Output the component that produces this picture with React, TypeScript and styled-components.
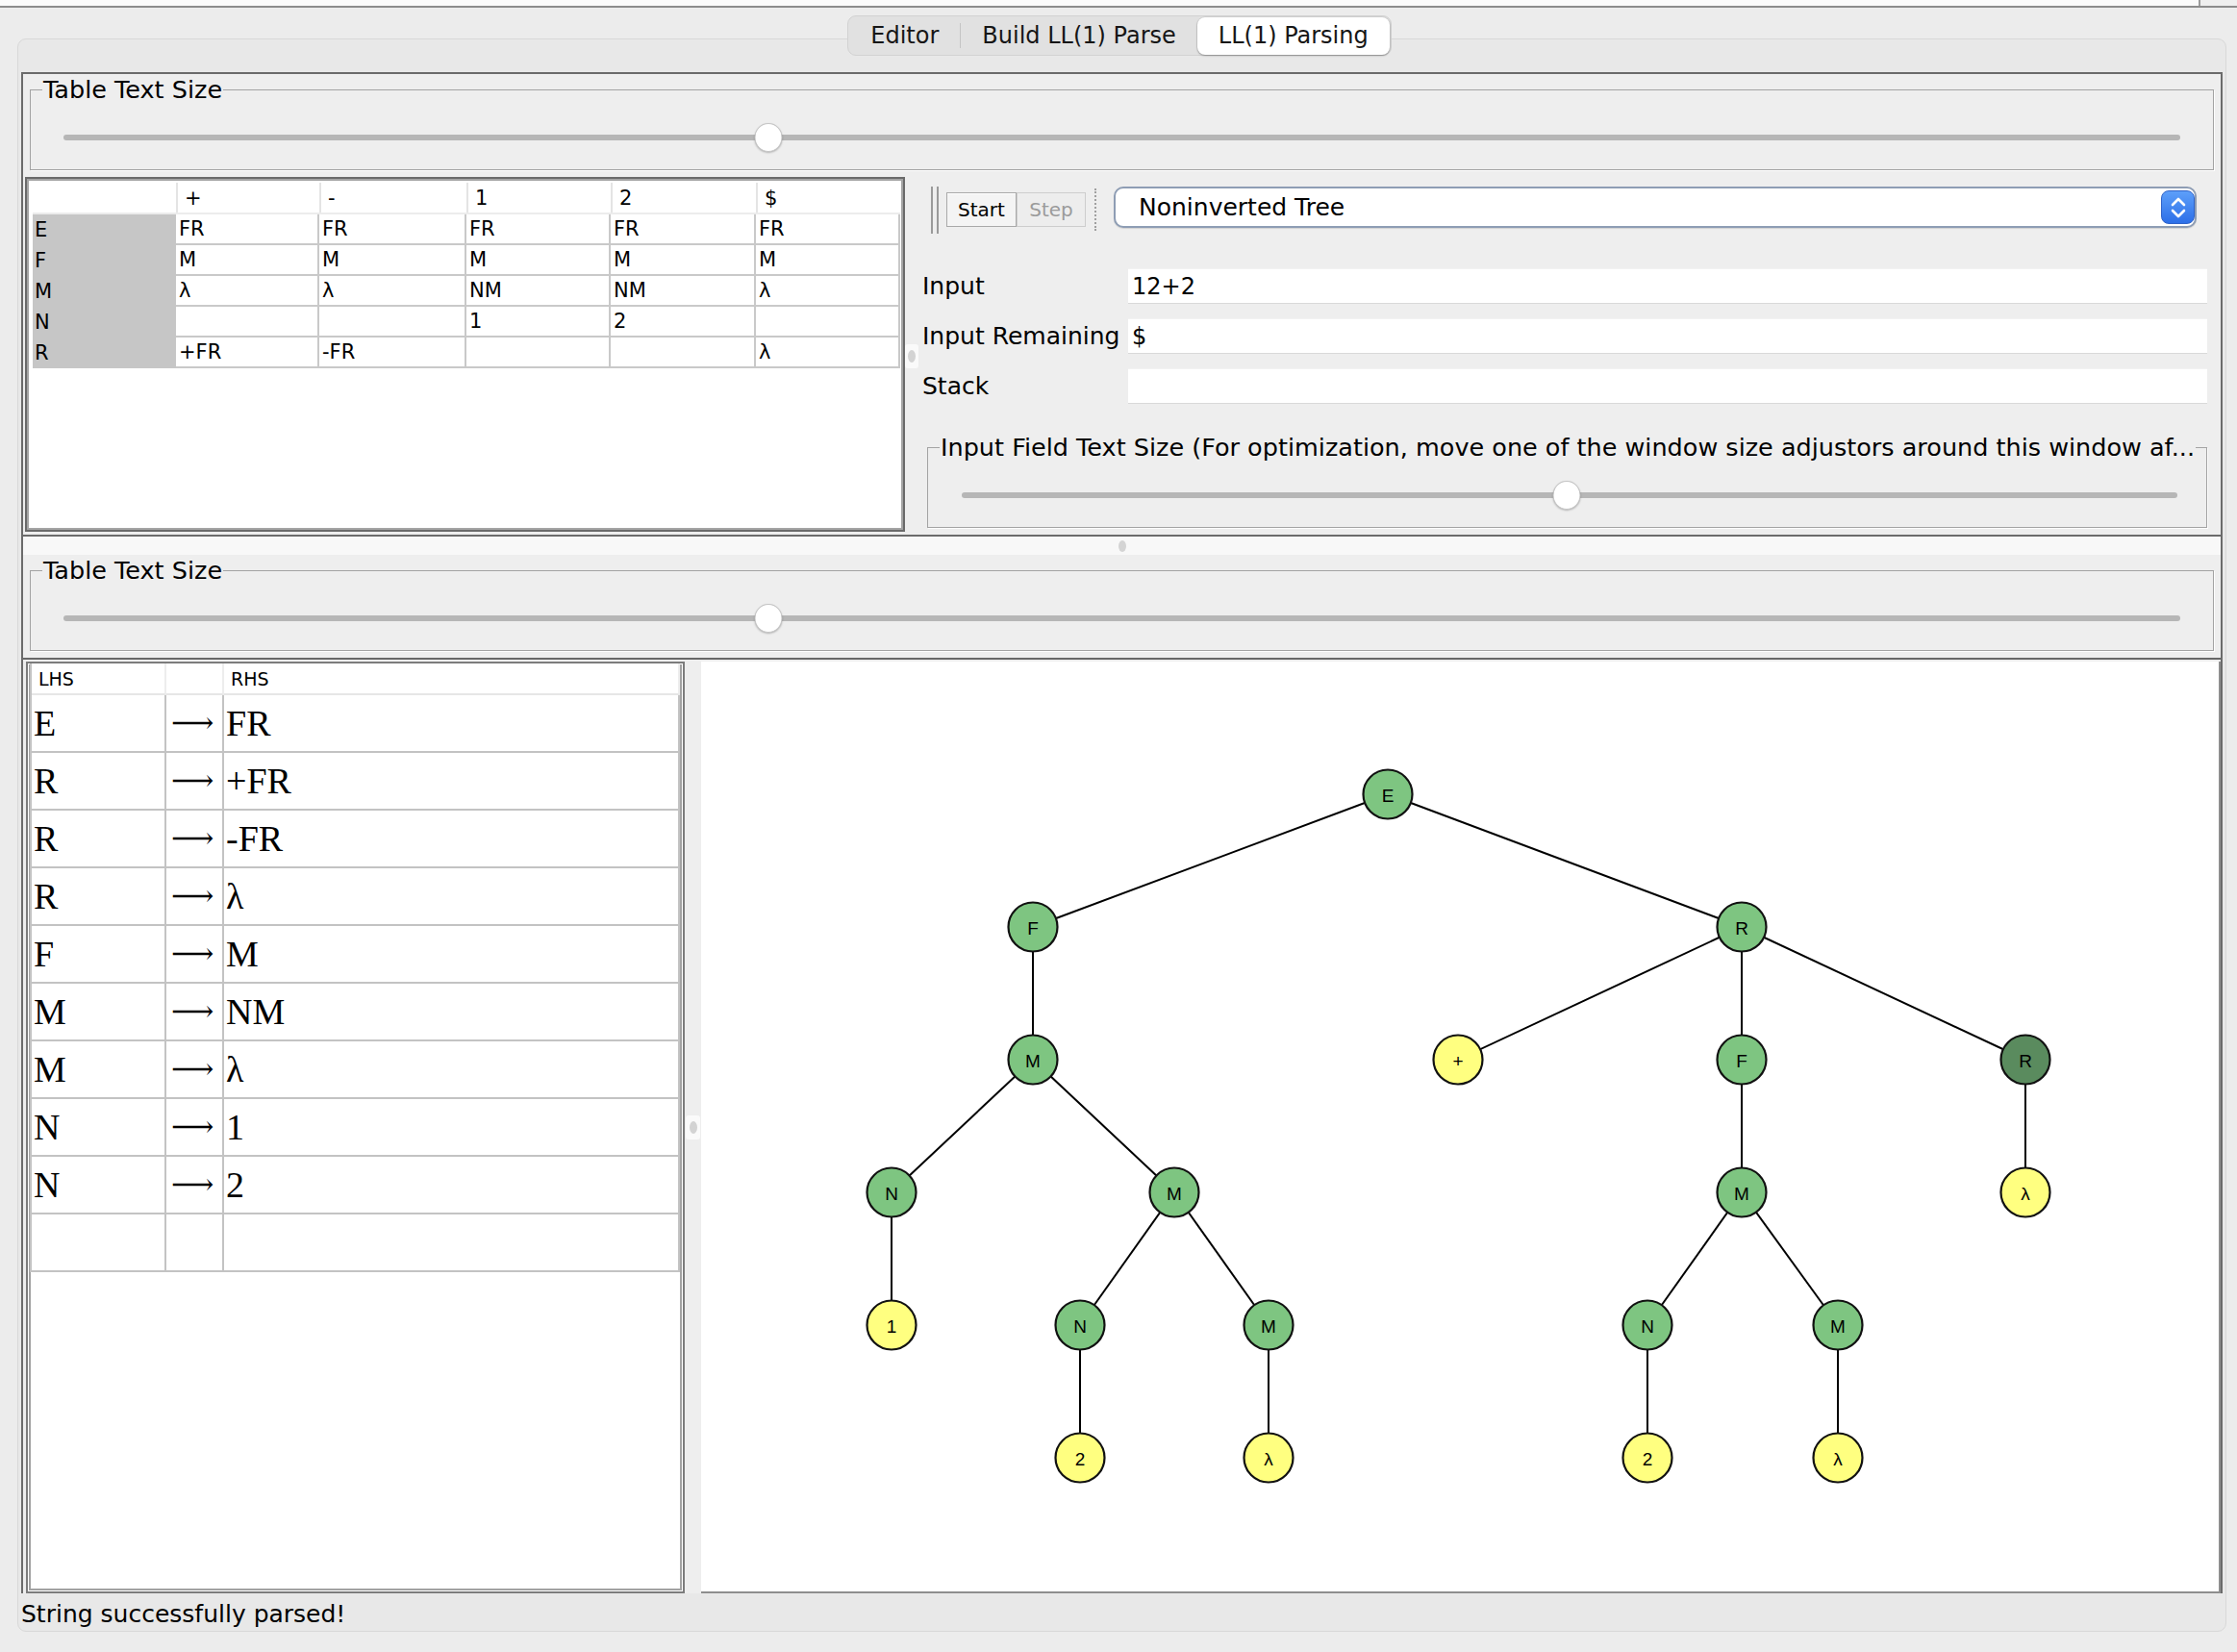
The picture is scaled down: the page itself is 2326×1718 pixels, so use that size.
import React from "react";
import styled, { createGlobalStyle } from "styled-components";

const UI = `"DejaVu Sans", "Open Sans", sans-serif`;
const SERIF = `"Liberation Serif", "DejaVu Serif", serif`;

const GlobalStyle = createGlobalStyle`
  *, *::before, *::after { box-sizing: border-box; }
  html, body { margin: 0; padding: 0; background: #ececec; }
  body { font-family: ${UI}; color: #000; }
`;

const Window = styled.div`
  width: 2326px;
  height: 1718px;
  overflow: hidden;
  background: #ececec;
  display: flex;
  flex-direction: column;
`;

const TopStrip = styled.div`
  flex: none;
  height: 8px;
  background: #fbfbfb;
  border-bottom: 2px solid #8c8c8c;
  display: flex;
  justify-content: flex-end;
`;

const TopStripCap = styled.div`
  width: 40px;
  background: #efefef;
  border-left: 2px solid #9c9c9c;
`;

const TabsRow = styled.div`
  flex: none;
  position: relative;
  z-index: 1;
  height: 42px;
  margin-top: 8px;
  padding-left: 2px;
  display: flex;
  justify-content: center;
`;

const TabGroup = styled.div`
  display: flex;
  align-items: center;
  height: 42px;
  padding: 0 1px;
  background: #e1e1e1;
  border: 1px solid #d2d2d2;
  border-radius: 9px;
`;

const Tab = styled.div<{ $active?: boolean }>`
  height: 39px;
  display: flex;
  align-items: center;
  padding: 0 22px;
  font-size: 24px;
  color: #161616;
  border-radius: 8px;
  background: ${(p) => (p.$active ? "#ffffff" : "transparent")};
  box-shadow: ${(p) =>
    p.$active ? "0 1px 2px rgba(0,0,0,0.3), 0 0 0 1px rgba(0,0,0,0.06)" : "none"};
`;

const TabDivider = styled.div`
  width: 1px;
  height: 26px;
  background: #c4c4c4;
`;

const Panel = styled.div`
  flex: none;
  width: 2297px;
  height: 1657px;
  margin: -18px 0 0 18px;
  padding: 34px 3px 0 3px;
  background: #e8e8e8;
  border: 1px solid #d8d8d8;
  border-radius: 9px;
  display: flex;
  flex-direction: column;
`;

const SplitFrame = styled.div`
  flex: none;
  height: 1582px;
  border: 2px solid #6b6b6b;
  border-bottom: none;
  background: #eeeeee;
  display: flex;
  flex-direction: column;
`;

const TopPane = styled.div`
  flex: none;
  height: 481px;
  border-bottom: 2px solid #6b6b6b;
  display: flex;
  flex-direction: column;
`;

const Group = styled.fieldset<{ $ml: number; $mr: number }>`
  flex: none;
  min-width: 0;
  margin: 2px ${(p) => p.$mr}px 0 ${(p) => p.$ml}px;
  padding: 0 12px;
  border: 1px solid #a3a3a3;
  box-shadow: 1px 1px 0 #ffffff;
`;

const GroupTitle = styled.legend`
  padding: 0 1px;
  font-size: 25.5px;
  line-height: 28px;
  color: #000;
  white-space: nowrap;
`;

const SliderRow = styled.div<{ $pl: number; $pr: number }>`
  height: 69px;
  padding: 3px ${(p) => p.$pr}px 0 ${(p) => p.$pl}px;
  display: flex;
  align-items: center;
`;

const Track = styled.div`
  position: relative;
  flex: 1;
  height: 6px;
  border-radius: 3px;
  background: #b6b6b6;
`;

const Thumb = styled.div<{ $pos: number }>`
  position: absolute;
  top: 50%;
  left: ${(p) => p.$pos}%;
  width: 29px;
  height: 30px;
  transform: translate(-50%, -50%);
  border-radius: 50%;
  background: #ffffff;
  border: 1px solid #c4c4c4;
  box-shadow: 0 1px 2px rgba(0, 0, 0, 0.25);
`;

const HSplit = styled.div`
  flex: 1;
  min-height: 0;
  margin-top: 7px;
  padding-left: 2px;
  display: flex;
`;

const TableFrame = styled.div`
  flex: none;
  width: 915px;
  height: 369px;
  padding: 4px 3px 0 6px;
  background: #ffffff;
  border: 2px solid #6a6a6a;
  box-shadow: inset 0 0 0 2px #a4a4a4;
`;

const ParseGrid = styled.div`
  display: grid;
  grid-template-columns: 149px 149px 153px 150px 151px 150px;
  grid-template-rows: 33px;
  grid-auto-rows: 32px;
  font-size: 21px;
`;

const ParseHead = styled.div<{ $first?: boolean }>`
  display: flex;
  align-items: center;
  padding-left: 9px;
  background: #ffffff;
  border-bottom: 2px solid #ececec;
  box-shadow: ${(p) => (p.$first ? "none" : "inset 2px 0 0 #e4e4e4")};
`;

const ParseRowHead = styled.div`
  display: flex;
  align-items: center;
  padding-left: 2px;
  background: #c6c6c6;
`;

const ParseCell = styled.div`
  display: flex;
  align-items: center;
  padding-left: 3px;
  border-right: 2px solid #c9c9c9;
  border-bottom: 2px solid #c9c9c9;
  white-space: nowrap;
`;

const Splitter = styled.div<{ $w: number }>`
  flex: none;
  width: ${(p) => p.$w}px;
  display: flex;
  align-items: center;
  justify-content: center;
`;

const SplitKnob = styled.div`
  width: 15px;
  height: 25px;
  background: #fafafa;
  border-radius: 3px;
  display: flex;
  align-items: center;
  justify-content: center;
  &::after {
    content: "";
    width: 8px;
    height: 13px;
    border-radius: 50%;
    background: #d3d3d3;
  }
`;

const RightPanel = styled.div`
  flex: 1;
  min-width: 0;
  padding: 10px 14px 0 4px;
  display: flex;
  flex-direction: column;
`;

const Toolbar = styled.div`
  flex: none;
  height: 49px;
  display: flex;
  align-items: flex-start;
`;

const Grip = styled.div`
  flex: none;
  width: 8px;
  height: 49px;
  margin-left: 9px;
  border-left: 2px solid #9a9a9a;
  border-right: 2px solid #9a9a9a;
`;

const ToolButton = styled.div<{ $disabled?: boolean; $w: number; $ml?: number }>`
  flex: none;
  width: ${(p) => p.$w}px;
  height: 36px;
  margin-top: 6px;
  margin-left: ${(p) => p.$ml ?? 0}px;
  display: flex;
  align-items: center;
  justify-content: center;
  font-size: 20px;
  color: ${(p) => (p.$disabled ? "#9b9b9b" : "#000000")};
  background: ${(p) => (p.$disabled ? "#ededed" : "#f4f4f4")};
  border: 1px solid ${(p) => (p.$disabled ? "#cdcdcd" : "#a9a9a9")};
  box-shadow: ${(p) => (p.$disabled ? "none" : "inset 0 1px 0 #ffffff")};
`;

const ToolSep = styled.div`
  flex: none;
  height: 44px;
  margin: 2px 0 0 9px;
  border-left: 2px dotted #a0a0a0;
`;

const Combo = styled.div`
  flex: 1;
  height: 43px;
  margin: 0 11px 0 18px;
  padding-left: 24px;
  display: flex;
  align-items: center;
  font-size: 25px;
  background: #ffffff;
  border: 2px solid #8e9db4;
  border-radius: 10px;
  box-shadow: 0 1px 1px rgba(0, 0, 0, 0.12);
`;

const ComboText = styled.span`
  flex: 1;
`;

const ComboButton = styled.div`
  flex: none;
  width: 35px;
  height: 35px;
  border-radius: 8px;
  background: linear-gradient(#5d9ff9, #2d6fe8);
  border: 1px solid #2f63c9;
  display: flex;
  align-items: center;
  justify-content: center;
`;

const Form = styled.div`
  flex: none;
  margin-top: 36px;
  display: grid;
  grid-template-columns: 214px 1fr;
  grid-auto-rows: 37px;
  row-gap: 15px;
`;

const FieldLabel = styled.div`
  display: flex;
  align-items: center;
  font-size: 25px;
  white-space: nowrap;
`;

const Field = styled.div`
  display: flex;
  align-items: center;
  padding-left: 4px;
  font-size: 24px;
  background: #ffffff;
  border-top: 1px solid #f2f2f2;
  border-bottom: 1px solid #d9d9d9;
`;

const RightGroup = styled(Group)`
  margin-top: 31px;
`;

const Divider = styled.div`
  flex: none;
  height: 19px;
  background: #f8f8f8;
  display: flex;
  align-items: center;
  justify-content: center;
  &::after {
    content: "";
    width: 8px;
    height: 12px;
    border-radius: 50%;
    background: #d4d4d4;
  }
`;

const BottomPane = styled.div`
  flex: 1;
  min-height: 0;
  display: flex;
  flex-direction: column;
`;

const BottomSplit = styled.div`
  flex: 1;
  min-height: 0;
  margin-top: 7px;
  padding: 2px 0 0 3px;
  border-top: 2px solid #676767;
  display: flex;
`;

const GrammarFrame = styled.div`
  flex: none;
  width: 685px;
  padding: 0 3px 0 2px;
  background: #ffffff;
  border: 2px solid #7c7c7c;
  box-shadow: inset 0 0 0 1px #ffffff, inset 0 0 0 3px #a2a2a2;
`;

const GrammarGrid = styled.div`
  display: grid;
  grid-template-columns: 140px 60px 474px;
  grid-template-rows: 33px;
  grid-auto-rows: 60px;
  border-left: 2px solid #c3c3c3;
  background: #ffffff;
`;

const GrammarHead = styled.div`
  display: flex;
  align-items: center;
  padding-left: 7px;
  font-size: 19px;
  border-bottom: 2px solid #e6e6e6;
  border-right: 2px solid #ededed;
`;

const GrammarCell = styled.div<{ $arrow?: boolean }>`
  display: flex;
  align-items: center;
  padding: ${(p) => (p.$arrow ? "0 0 3px 5px" : "0 0 0 2px")};
  font-family: ${(p) => (p.$arrow ? `"DejaVu Sans", "DejaVu Serif", sans-serif` : SERIF)};
  font-weight: ${(p) => (p.$arrow ? 200 : 400)};
  font-size: ${(p) => (p.$arrow ? "31px" : "38px")};
  border-right: 2px solid #c3c3c3;
  border-bottom: 2px solid #c3c3c3;
  white-space: nowrap;
  overflow: hidden;
`;

const BottomSplitter = styled(Splitter)`
  background: #eeeeee;
`;

const TreeFrame = styled.div`
  flex: 1;
  min-width: 0;
  overflow: hidden;
  background: #ffffff;
  border-right: 2px solid #8e8e8e;
  border-bottom: 2px solid #8e8e8e;
`;

const TreeSvg = styled.svg`
  display: block;
`;

const StatusBar = styled.div`
  flex: none;
  height: 39px;
  padding-top: 3px;
  display: flex;
  align-items: center;
  font-size: 25px;
  color: #000;
`;

type Kind = "g" | "y" | "d";
interface TNode {
  id: string;
  x: number;
  y: number;
  label: string;
  kind: Kind;
}

const treeNodes: TNode[] = [
  { id: "E", x: 1443, y: 826, label: "E", kind: "g" },
  { id: "F1", x: 1074, y: 964, label: "F", kind: "g" },
  { id: "R1", x: 1811, y: 964, label: "R", kind: "g" },
  { id: "M1", x: 1074, y: 1102, label: "M", kind: "g" },
  { id: "P", x: 1516, y: 1102, label: "+", kind: "y" },
  { id: "F2", x: 1811, y: 1102, label: "F", kind: "g" },
  { id: "R2", x: 2106, y: 1102, label: "R", kind: "d" },
  { id: "N1", x: 927, y: 1240, label: "N", kind: "g" },
  { id: "M2", x: 1221, y: 1240, label: "M", kind: "g" },
  { id: "M4", x: 1811, y: 1240, label: "M", kind: "g" },
  { id: "L3", x: 2106, y: 1240, label: "λ", kind: "y" },
  { id: "T1", x: 927, y: 1378, label: "1", kind: "y" },
  { id: "N2", x: 1123, y: 1378, label: "N", kind: "g" },
  { id: "M3", x: 1319, y: 1378, label: "M", kind: "g" },
  { id: "N3", x: 1713, y: 1378, label: "N", kind: "g" },
  { id: "M5", x: 1911, y: 1378, label: "M", kind: "g" },
  { id: "T2", x: 1123, y: 1516, label: "2", kind: "y" },
  { id: "L1", x: 1319, y: 1516, label: "λ", kind: "y" },
  { id: "T3", x: 1713, y: 1516, label: "2", kind: "y" },
  { id: "L2", x: 1911, y: 1516, label: "λ", kind: "y" },
];

const treeEdges: [string, string][] = [
  ["E", "F1"],
  ["E", "R1"],
  ["F1", "M1"],
  ["M1", "N1"],
  ["M1", "M2"],
  ["N1", "T1"],
  ["M2", "N2"],
  ["M2", "M3"],
  ["N2", "T2"],
  ["M3", "L1"],
  ["R1", "P"],
  ["R1", "F2"],
  ["R1", "R2"],
  ["F2", "M4"],
  ["M4", "N3"],
  ["M4", "M5"],
  ["N3", "T3"],
  ["M5", "L2"],
  ["R2", "L3"],
];

const fills: Record<Kind, string> = { g: "#7ec581", y: "#ffff80", d: "#5a8b5e" };

const ParseTree: React.FC = () => {
  const byId = Object.fromEntries(treeNodes.map((n) => [n.id, n]));
  return (
    <TreeSvg width={1577} height={964} viewBox="729 688 1577 964">
      {treeEdges.map(([a, b]) => (
        <line
          key={a + b}
          x1={byId[a].x}
          y1={byId[a].y}
          x2={byId[b].x}
          y2={byId[b].y}
          stroke="#000"
          strokeWidth={2}
        />
      ))}
      {treeNodes.map((n) => (
        <g key={n.id}>
          <circle cx={n.x} cy={n.y} r={25.5} fill={fills[n.kind]} stroke="#111" strokeWidth={2.2} />
          <text
            x={n.x}
            y={n.y + 1}
            textAnchor="middle"
            dominantBaseline="central"
            fontFamily={`"Liberation Sans", Arial, sans-serif`}
            fontSize={19}
            fill="#000"
          >
            {n.label}
          </text>
        </g>
      ))}
    </TreeSvg>
  );
};

const Slider: React.FC<{ pos: number; pl: number; pr: number }> = ({ pos, pl, pr }) => (
  <SliderRow $pl={pl} $pr={pr}>
    <Track>
      <Thumb $pos={pos} />
    </Track>
  </SliderRow>
);

const parseHeader = ["", "+", "-", "1", "2", "$"];
const parseRows: [string, string[]][] = [
  ["E", ["FR", "FR", "FR", "FR", "FR"]],
  ["F", ["M", "M", "M", "M", "M"]],
  ["M", ["λ", "λ", "NM", "NM", "λ"]],
  ["N", ["", "", "1", "2", ""]],
  ["R", ["+FR", "-FR", "", "", "λ"]],
];

const grammar: [string, string][] = [
  ["E", "FR"],
  ["R", "+FR"],
  ["R", "-FR"],
  ["R", "λ"],
  ["F", "M"],
  ["M", "NM"],
  ["M", "λ"],
  ["N", "1"],
  ["N", "2"],
  ["", ""],
];

export default function App() {
  return (
    <>
      <GlobalStyle />
      <Window>
        <TopStrip>
          <TopStripCap />
        </TopStrip>
        <TabsRow>
          <TabGroup>
            <Tab>Editor</Tab>
            <TabDivider />
            <Tab>Build LL(1) Parse</Tab>
            <Tab $active>LL(1) Parsing</Tab>
          </TabGroup>
        </TabsRow>
        <Panel>
          <SplitFrame>
            <TopPane>
              <Group $ml={7} $mr={7}>
                <GroupTitle>Table Text Size</GroupTitle>
                <Slider pos={33.3} pl={22} pr={22} />
              </Group>
              <HSplit>
                <TableFrame>
                  <ParseGrid>
                    {parseHeader.map((h, i) => (
                      <ParseHead key={"h" + i} $first={i === 0}>
                        {h}
                      </ParseHead>
                    ))}
                    {parseRows.map(([head, cells]) => (
                      <React.Fragment key={head}>
                        <ParseRowHead>{head}</ParseRowHead>
                        {cells.map((c, j) => (
                          <ParseCell key={head + j}>{c}</ParseCell>
                        ))}
                      </React.Fragment>
                    ))}
                  </ParseGrid>
                </TableFrame>
                <Splitter $w={14}>
                  <SplitKnob />
                </Splitter>
                <RightPanel>
                  <Toolbar>
                    <Grip />
                    <ToolButton $w={73} $ml={8}>
                      Start
                    </ToolButton>
                    <ToolButton $w={72} $disabled>
                      Step
                    </ToolButton>
                    <ToolSep />
                    <Combo>
                      <ComboText>Noninverted Tree</ComboText>
                      <ComboButton>
                        <svg width="22" height="26" viewBox="0 0 22 26">
                          <polyline
                            points="5,10 11,4 17,10"
                            fill="none"
                            stroke="#fff"
                            strokeWidth="2.6"
                            strokeLinecap="round"
                            strokeLinejoin="round"
                          />
                          <polyline
                            points="5,16 11,22 17,16"
                            fill="none"
                            stroke="#fff"
                            strokeWidth="2.6"
                            strokeLinecap="round"
                            strokeLinejoin="round"
                          />
                        </svg>
                      </ComboButton>
                    </Combo>
                  </Toolbar>
                  <Form>
                    <FieldLabel>Input</FieldLabel>
                    <Field>12+2</Field>
                    <FieldLabel>Input Remaining</FieldLabel>
                    <Field>$</Field>
                    <FieldLabel>Stack</FieldLabel>
                    <Field />
                  </Form>
                  <RightGroup $ml={5} $mr={0}>
                    <GroupTitle>
                      Input Field Text Size (For optimization, move one of the window size adjustors around this window af...
                    </GroupTitle>
                    <Slider pos={49.8} pl={23} pr={18} />
                  </RightGroup>
                </RightPanel>
              </HSplit>
            </TopPane>
            <Divider />
            <BottomPane>
              <Group $ml={7} $mr={7}>
                <GroupTitle>Table Text Size</GroupTitle>
                <Slider pos={33.3} pl={22} pr={22} />
              </Group>
              <BottomSplit>
                <GrammarFrame>
                  <GrammarGrid>
                    <GrammarHead>LHS</GrammarHead>
                    <GrammarHead />
                    <GrammarHead>RHS</GrammarHead>
                    {grammar.map(([l, r], i) => (
                      <React.Fragment key={"g" + i}>
                        <GrammarCell>{l}</GrammarCell>
                        <GrammarCell $arrow>{l ? "⟶" : ""}</GrammarCell>
                        <GrammarCell>{r}</GrammarCell>
                      </React.Fragment>
                    ))}
                  </GrammarGrid>
                </GrammarFrame>
                <BottomSplitter $w={17}>
                  <SplitKnob />
                </BottomSplitter>
                <TreeFrame>
                  <ParseTree />
                </TreeFrame>
              </BottomSplit>
            </BottomPane>
          </SplitFrame>
          <StatusBar>String successfully parsed!</StatusBar>
        </Panel>
      </Window>
    </>
  );
}
